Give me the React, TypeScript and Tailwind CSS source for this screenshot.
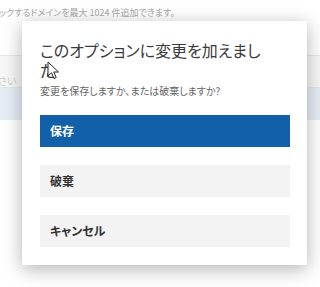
import React from "react";

const jp = "font-['Noto_Sans_CJK_JP','Noto_Sans',sans-serif] [font-feature-settings:'palt']";

const Cursor = () => (
  <svg
    className="absolute left-[47px] top-[61px]"
    width="13"
    height="19"
    viewBox="0 0 13 19"
  >
    <path
      d="M1 1 L1 15 L4.5 11.8 L7 17.5 L9.2 16.5 L6.8 11 L11.5 11 Z"
      fill="#fff"
      stroke="#222"
      strokeWidth="1"
      strokeLinejoin="round"
    />
  </svg>
);

const DialogButton = ({ label, primary }: { label: string; primary?: boolean }) => (
  <button
    className={
      primary
        ? "h-8 w-full bg-[#1160a9] pl-[10px] text-left text-[12px] font-bold text-white"
        : "h-8 w-full bg-[#f3f3f3] pl-[10px] text-left text-[12px] font-bold text-[#333]"
    }
  >
    {label}
  </button>
);

export default function App() {
  return (
    <div className={`relative h-[287px] w-[320px] overflow-hidden bg-white ${jp}`}>
      {/* page behind the dialog, faded */}
      <div className="flex flex-col pt-[5px]">
        <p className="-ml-[1px] text-[9px] leading-[16px] text-[#a8a8a8]">
          ックするドメインを最大 1024 件追加できます。
        </p>
        <div className="mt-[34px] h-[33px] border-y border-[#e6e6e6] bg-[#f7f7f7] pt-[10px]">
          <span className="-ml-[2px] text-[10px] text-[#cfcfcf]">さい</span>
        </div>
        <div className="h-[32px] bg-[#e6edf5]" />
      </div>

      {/* dialog */}
      <div className="absolute left-[22px] top-[21px] flex w-[285px] flex-col bg-white pb-[18px] pl-[18px] pr-[17px] pt-[19px] shadow-[0_4px_18px_rgba(0,0,0,0.3)]">
        <h2 className="pr-[20px] text-[16px] font-normal leading-[20px] text-[#3a3a3a]">
          このオプションに変更を加えました
        </h2>
        <p className="mt-[3px] text-[10px] leading-[16px] text-[#666]">
          変更を保存しますか、または破棄しますか?
        </p>
        <div className="mt-[16px] flex flex-col gap-[18px]">
          <DialogButton label="保存" primary />
          <DialogButton label="破棄" />
          <DialogButton label="キャンセル" />
        </div>
      </div>

      <Cursor />
    </div>
  );
}
